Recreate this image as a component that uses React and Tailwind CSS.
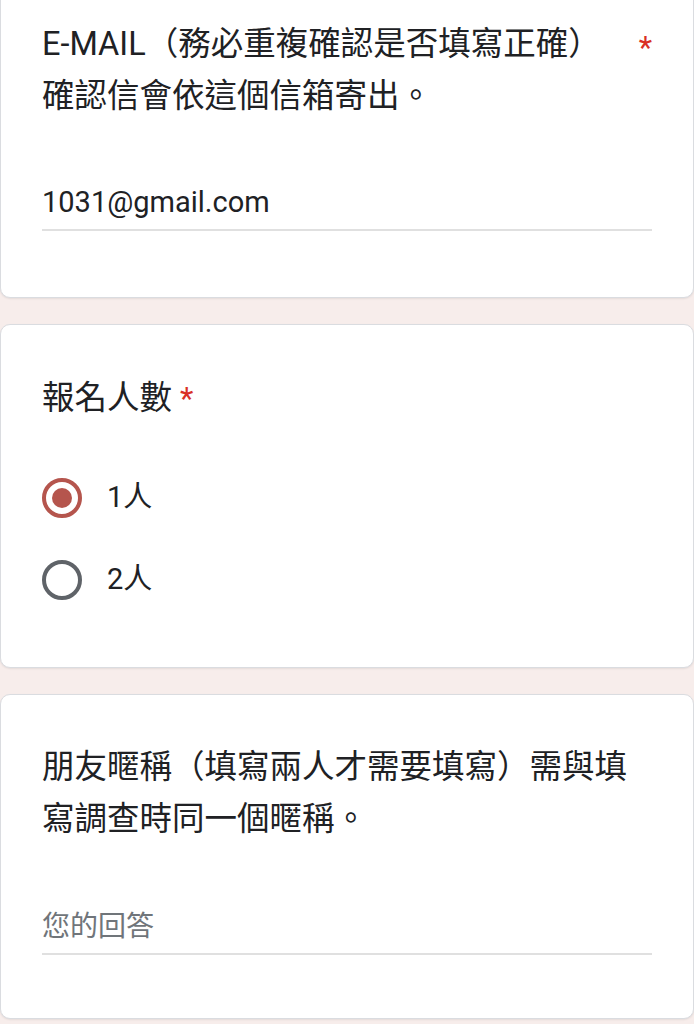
import React from "react";

const font = { fontFamily: '"Roboto", "Noto Sans CJK TC", sans-serif' };

const Card = ({ className = "", children }) => (
  <div
    className={`bg-white border border-[#dadce0] rounded-[10px] shadow-[0_1px_2px_rgba(0,0,0,0.08)] ${className}`}
  >
    {children}
  </div>
);

const Radio = ({ checked, label }) => (
  <div className="flex items-center h-[82px]">
    <div
      className={`w-[40px] h-[40px] rounded-full border-[4px] flex items-center justify-center ${
        checked ? "border-[#b5554d]" : "border-[#5f6368]"
      }`}
    >
      {checked && <div className="w-[20px] h-[20px] rounded-full bg-[#b5554d]" />}
    </div>
    <span className="ml-[25px] text-[29px] text-[#202124]">{label}</span>
  </div>
);

export default function App() {
  return (
    <div className="bg-[#f7edeb] min-h-screen flex flex-col gap-[26px]" style={font}>
      {/* Email */}
      <Card className="-mt-[12px] pt-[29px] pb-[66px] px-[41px] rounded-t-none">
        <div className="flex justify-between text-[32.5px] leading-[52px] text-[#202124]">
          <div className="flex-1">
            E-MAIL（務必重複確認是否填寫正確）
            <br />
            確認信會依這個信箱寄出。
          </div>
          <span className="text-[#d93025] text-[31px] mt-[4px]">*</span>
        </div>
        <div className="mt-[54px] border-b-2 border-[#e0e0e0] text-[29px] leading-[53px] text-[#202124]">
          1031@gmail.com
        </div>
      </Card>

      {/* Count */}
      <Card className="pt-[47px] pb-[46px] px-[41px]">
        <div className="text-[32.5px] leading-[52px] text-[#202124]">
          報名人數 <span className="text-[#d93025] text-[31px]">*</span>
        </div>
        <div className="mt-[32px]">
          <Radio checked label="1人" />
          <Radio label="2人" />
        </div>
      </Card>

      {/* Nickname */}
      <Card className="pt-[46px] pb-[63px] px-[41px]">
        <div className="text-[32.5px] leading-[52px] text-[#202124]">
          朋友暱稱（填寫兩人才需要填寫）需與填寫調查時同一個暱稱。
        </div>
        <div className="mt-[55px] border-b-2 border-[#e0e0e0] text-[28px] leading-[53px] text-[#70757a]">
          您的回答
        </div>
      </Card>
    </div>
  );
}
